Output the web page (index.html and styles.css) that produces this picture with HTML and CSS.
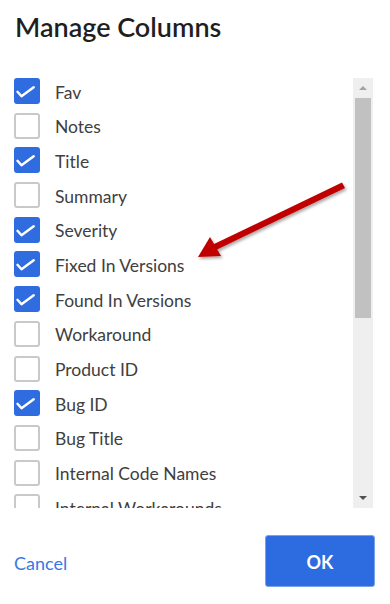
FILE: index.html
```html
<!DOCTYPE html>
<html>
<head>
<meta charset="utf-8">
<link rel="stylesheet" href="styles.css">
</head>
<body>
<div class="dialog">
  <h1 class="title">Manage Columns</h1>
  <div class="listwrap">
    <ul class="list">
      <li class="row"><span class="box on"><svg viewBox="0 0 22 22"><path d="M1.5 11.8l4 4.4 12.2-9" /></svg></span><span class="label">Fav</span></li>
      <li class="row"><span class="box"></span><span class="label">Notes</span></li>
      <li class="row"><span class="box on"><svg viewBox="0 0 22 22"><path d="M1.5 11.8l4 4.4 12.2-9" /></svg></span><span class="label">Title</span></li>
      <li class="row"><span class="box"></span><span class="label">Summary</span></li>
      <li class="row"><span class="box on"><svg viewBox="0 0 22 22"><path d="M1.5 11.8l4 4.4 12.2-9" /></svg></span><span class="label">Severity</span></li>
      <li class="row"><span class="box on"><svg viewBox="0 0 22 22"><path d="M1.5 11.8l4 4.4 12.2-9" /></svg></span><span class="label">Fixed In Versions</span></li>
      <li class="row"><span class="box on"><svg viewBox="0 0 22 22"><path d="M1.5 11.8l4 4.4 12.2-9" /></svg></span><span class="label">Found In Versions</span></li>
      <li class="row"><span class="box"></span><span class="label">Workaround</span></li>
      <li class="row"><span class="box"></span><span class="label">Product ID</span></li>
      <li class="row"><span class="box on"><svg viewBox="0 0 22 22"><path d="M1.5 11.8l4 4.4 12.2-9" /></svg></span><span class="label">Bug ID</span></li>
      <li class="row"><span class="box"></span><span class="label">Bug Title</span></li>
      <li class="row"><span class="box"></span><span class="label">Internal Code Names</span></li>
      <li class="row"><span class="box"></span><span class="label">Internal Workarounds</span></li>
    </ul>
    <div class="scrollbar">
      <div class="arrow up"></div>
      <div class="thumb"></div>
      <div class="track"></div>
      <div class="arrow down"></div>
    </div>
  </div>
  <div class="footer">
    <a class="cancel">Cancel</a>
    <button class="ok">OK</button>
  </div>
  <svg class="pointer" width="390" height="604" viewBox="0 0 390 604">
    <defs>
      <filter id="sh" x="-20%" y="-20%" width="140%" height="140%">
        <feDropShadow dx="1.5" dy="2" stdDeviation="1.5" flood-color="#000" flood-opacity="0.35"/>
      </filter>
    </defs>
    <g filter="url(#sh)" fill="#c00000">
      <path d="M342 182.5 L345 188 L216 250 L213 244.5 Z"/>
      <path d="M198 257 L210 237 L221 256 Z"/>
    </g>
  </svg>
</div>
</body>
</html>
```

FILE: styles.css
```css
* { box-sizing: border-box; }
html, body { margin: 0; padding: 0; background: #fff; }
body { font-family: "Lato", "Open Sans", sans-serif; color: #3a3a3a; }
.dialog { position: relative; width: 390px; height: 604px; }
.title {
  margin: 0;
  padding: 11px 0 0 15px;
  font-size: 27px;
  font-weight: 600;
  color: #1f1f1f;
  line-height: 32px;
  height: 78px;
}
.listwrap { display: flex; height: 430px; }
.list {
  list-style: none;
  margin: 0;
  padding: 0 0 0 14px;
  flex: 1;
  overflow: hidden;
  display: flex;
  flex-direction: column;
  gap: 8.7px;
}
.row { display: flex; align-items: center; height: 26px; flex-shrink: 0; }
.box {
  width: 26px; height: 26px;
  border: 2px solid #c9c9c9;
  border-radius: 3px;
  background: #fff;
  flex-shrink: 0;
  display: flex;
}
.box.on { background: #2f6ce0; border-color: #2f6ce0; }
.box svg { width: 22px; height: 22px; }
.box svg path { fill: none; stroke: #fff; stroke-width: 2.4; stroke-linecap: round; stroke-linejoin: round; }
.label { margin-left: 15px; font-size: 17.5px; color: #404040; white-space: nowrap; padding-top: 2px; }
.scrollbar {
  width: 20px;
  margin-right: 17px;
  background: #efefef;
  display: flex;
  flex-direction: column;
  align-items: center;
}
.arrow { height: 20px; width: 20px; display: flex; align-items: center; justify-content: center; }
.arrow.up::before {
  content: ""; border-left: 4px solid transparent; border-right: 4px solid transparent;
  border-bottom: 4px solid #a3a3a3;
}
.arrow.down::before {
  content: ""; border-left: 4px solid transparent; border-right: 4px solid transparent;
  border-top: 4px solid #505050;
}
.thumb { width: 16px; height: 220px; background: #c1c1c1; }
.track { flex: 1; }
.footer {
  display: flex;
  justify-content: space-between;
  align-items: center;
  padding: 27px 15px 0 14px;
}
.cancel { color: #3a78e6; font-size: 18px; padding-top: 3px; }
.ok {
  width: 110px; height: 52px;
  background: #2d6be0;
  border: 1px solid #7aa2ec;
  border-radius: 3px;
  color: #fff;
  font-family: "Lato", "Open Sans", sans-serif;
  font-weight: 700;
  font-size: 18px;
  padding-top: 2px;
}
.pointer { position: absolute; left: 0; top: 0; pointer-events: none; }
```
